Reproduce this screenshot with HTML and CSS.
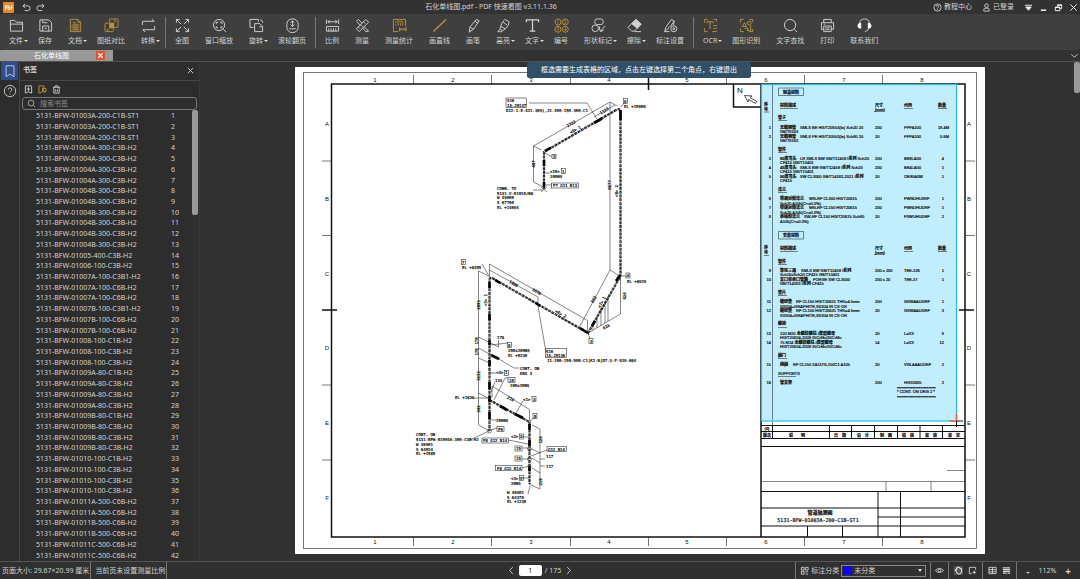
FILE: index.html
```html
<!DOCTYPE html>
<html lang="zh-CN">
<head>
<meta charset="utf-8">
<title>石化单线图.pdf - PDF 快速看图 v3.11.1.36</title>
<link rel="stylesheet" href="styles.css">
</head>
<body>
<header class="titlebar">
  <div class="title-left">
    <svg class="logo" viewBox="0 0 12 12"><rect width="12" height="12" rx="1" fill="#e8871e"/><path d="M2.500 8.500V4H4v2.500H2.500M5.500 3v5H7.500V5.500H5.500M9 8.500V4h1.500M9 6h1.500" fill="none" stroke="#fff" stroke-width=".9"/></svg>
    <button class="plain" aria-label="撤销"><svg class="icon-s" viewBox="0 0 10 10"><path d="M3.500 1 1 3.200 3.500 5.500M1 3.200H6.500a2.600 2.600 0 0 1 0 5.200H3"/></svg></button>
    <button class="plain" aria-label="重做"><svg class="icon-s" viewBox="0 0 10 10"><path d="M6.500 1 9 3.200 6.500 5.500M9 3.200H3.500a2.600 2.600 0 0 0 0 5.200H7"/></svg></button>
  </div>
  <h1 class="title">石化单线图.pdf - PDF 快速看图 v3.11.1.36</h1>
  <div class="title-right">
    <button class="plain account"><svg class="icon-s" viewBox="0 0 10 10"><circle cx="5" cy="5" r="4"/><path d="M3.700 4a1.300 1.300 0 1 1 1.800 1.200Q5 5.400 5 6M5 7v.8"/></svg>教程中心</button>
    <button class="plain account"><svg class="icon-s" viewBox="0 0 10 10"><circle cx="5" cy="3" r="2"/><path d="M2 9V7.500Q2 5.800 4 5.800H6Q8 5.800 8 7.500V9Z"/></svg>已登录</button>
    <div class="window-buttons">
      <button class="plain" aria-label="菜单"><svg class="icon-s bright" viewBox="0 0 10 10"><path d="M1 2.500h8"/><path d="M2 4.500h6L5 8Z" fill="#fff"/></svg></button>
      <button class="plain" aria-label="最小化"><svg class="icon-s bright" viewBox="0 0 10 10"><path d="M2 8h6" stroke-width="1.500"/></svg></button>
      <button class="plain" aria-label="还原"><svg class="icon-s bright" viewBox="0 0 10 10"><path d="M4 4V2h4.500v4H6.500M1.500 4.500h5V8.500h-5ZM4 2.500h4.500M1.500 5h5"/></svg></button>
      <button class="plain" aria-label="关闭"><svg class="icon-s bright" viewBox="0 0 10 10"><path d="m1.500 1.500 7 7M8.500 1.500l-7 7"/></svg></button>
    </div>
  </div>
</header>

<nav class="ribbon" aria-label="工具栏">
  <div class="group ends-menu">
    <button class="tool menu"><svg viewBox="0 0 16 16"><path d="M1.500 14V2.500H6L8 4.500h6.500V14ZM1.500 6.500h13"/></svg><span>文件</span></button>
    <button class="tool"><svg viewBox="0 0 16 16"><path d="M2 2h9.500L14.500 5v9H2ZM5 14V8.500h6.500V14M5 2.500V5h5M7 11h2.500"/></svg><span>保存</span></button>
    <button class="tool menu gold"><svg viewBox="0 0 16 16"><path d="M2.500 1.500h8l3 3v10h-11ZM10.500 1.500v3h3M5 5h3.500M5 7.500h6M5 10h6M5 12.500h6" /><path d="M3.500 6h9v7.500h-9Z" class="fill-dim"/></svg><span>文档</span></button>
    <button class="tool gold"><svg viewBox="0 0 16 16"><path d="M6 5V2q0-1 1-1h7q1 0 1 1v7q0 1-1 1h-3M5 5.500H2q-1 0-1 1V13.500q0 1 1 1H9q1 0 1-1V11M3.500 11.500V13h2M12.500 4.500V3h-2"/><rect x="6" y="5.500" width="4.500" height="5" fill="currentColor"/></svg><span>图纸对比</span></button>
    <button class="tool menu"><svg viewBox="0 0 16 16"><path d="M1.500 7.500V3.500H14M11.500 1l2.500 2.500M14.500 8.500v4H2M4.500 15 2 12.500"/></svg><span>转换</span></button>
  </div>
  <div class="group">
    <button class="tool"><svg viewBox="0 0 16 16"><path d="M1.500 5V1.500H5M1.500 1.500l5 5M11 1.500h3.500V5M14.500 1.500l-5 5M1.500 11v3.500H5M1.500 14.500l5-5M11 14.500h3.500V11M14.500 14.500l-5-5"/></svg><span>全图</span></button>
    <button class="tool"><svg viewBox="0 0 16 16"><circle cx="7.500" cy="7.500" r="6"/><path d="m12 12 3 3M4.500 6.500v-2h2M8.500 4.500h2v2M10.500 8.500v2h-2M6.500 10.500h-2v-2"/></svg><span>窗口缩放</span></button>
    <button class="tool menu"><svg viewBox="0 0 16 16"><path d="M10 4V1.500H1V10h4M6 6h5.500l3 3v5.500H6ZM12 2q2.500 0 2.500 3M11 9.500h3"/></svg><span>旋转</span></button>
    <button class="tool"><svg viewBox="0 0 16 16"><rect x="2" y="1" width="12" height="14.500" rx="5.500"/><path d="M8 3v6M6 5l2-2 2 2M6 7l2 2 2-2M4.500 11.500h7"/></svg><span>滚轮翻页</span></button>
  </div>
  <div class="group">
    <button class="tool"><svg viewBox="0 0 16 16"><path d="M1.500 1.500v5M14.500 1.500v5M3 4h10M5 2.500 3 4l2 1.500M11 2.500 13 4l-2 1.500M1.500 9h13v5h-13ZM4 11v3M6.500 11v3M9 11v3M11.500 11v3"/></svg><span>比例</span></button>
    <button class="tool"><svg viewBox="0 0 16 16"><path d="m11.500 1.500 3 3-10 10-3-3ZM1.500 3.500l2-2 4 4M9.500 9l5 5-3 .5-4-4.500M9 4l2 2M6 7l2 2M3.500 9.500l1.500 1.500M2 4l4 4"/></svg><span>测量</span></button>
    <button class="tool gold"><svg viewBox="0 0 16 16"><path d="M7 14.500H1.500v-13h13V9M4 8V6.500M6.500 8V4.500M9 8V5.500M11.500 8V3.500M3.500 5 6 3l2.500 1L11 3M8 10v4M15 10v4M9 12h5M10 11l-1.500 1 1.500 1M13 11l1.500 1-1.500 1"/></svg><span>测量统计</span></button>
    <button class="tool gold"><svg viewBox="0 0 16 16"><path d="M1.500 14.500 15 1.500" stroke-width="1.500"/></svg><span>画直线</span></button>
    <button class="tool"><svg viewBox="0 0 16 16"><path d="m11 1.500 3 1.500-6 9-4.500 2.500.5-4.500ZM4.500 10l3.500 2M9.500 3.500l3 2M3 15l2-.5"/></svg><span>画笔</span></button>
    <button class="tool menu"><svg viewBox="0 0 16 16"><path d="m9.500 1.500 4.500 2.500q0 4-4 7.500L5 9q1-5 4.500-7.500ZM5 9l-1 3 3 1.500 3-2M3.500 12.500 2 14.500l4 .3 1-1.300M7.500 4.500l4.500 3"/></svg><span>高亮</span></button>
    <button class="tool menu"><svg viewBox="0 0 16 16"><path d="M1.500 4.500V2h13v2.500M8 2v12M5 14h6" stroke-width="1.300"/></svg><span>文字</span></button>
    <button class="tool gold"><svg viewBox="0 0 16 16"><circle cx="4.300" cy="4.300" r="3.200"/><circle cx="12" cy="4.300" r="3.200"/><circle cx="4.300" cy="12" r="3.200"/><circle cx="12" cy="12" r="3.200"/><path d="M4.300 2.500v3.500M11 3q2-.5 1.500 1L11 6h2M3.500 10.500h1.500L4 12q2 0 .5 1.500h-1M12.500 14v-3.500L11 12.500h2.500" stroke-width=".7"/></svg><span>编号</span></button>
    <button class="tool menu"><svg viewBox="0 0 16 16"><rect x="4" y="1" width="9" height="6" rx="2.500"/><circle cx="4.500" cy="11" r="3.500"/><path d="M9 9v3M10 14.500l5-6M9 11l1 3.500 3.500-1.500"/></svg><span>形状标记</span></button>
    <button class="tool menu"><svg viewBox="0 0 16 16"><path d="m9.500 1.500 5.500 5L8 14H5L1 10Z"/><path d="m9.500 1.500 5.500 5-4 4.500L5 6Z" fill="currentColor"/><path d="M8 14.500h7"/></svg><span>擦除</span></button>
    <button class="tool"><svg viewBox="0 0 16 16"><path d="m9 1.500 3 2-1 4M9 1.500 3 10l-1 3.500 3-1.500 2-3M1 14.500h6M12 3 8 9"/><circle cx="11.500" cy="11.500" r="3.200"/><circle cx="11.500" cy="11.500" r="1"/></svg><span>标注设置</span></button>
  </div>
  <div class="group last">
    <button class="tool menu gold"><svg viewBox="0 0 16 16"><path d="M1.500 5V1.500H5M11 1.500h3.500V4M1.500 11v3.500H5M4 5.500V4h7v1.500M7.500 4v8M11 8h4M11 11h4M10 14.500h5"/></svg><span>OCR</span></button>
    <button class="tool gold"><svg viewBox="0 0 16 16"><path d="M1.500 5V1.500H5M11 1.500h3.500V4M1.500 11v3.500H5M14.500 12v2.500H11M6 5l2 4H3.500ZM9 10v3.500M6 11h2M12.500 8v5.500h-3V11"/><circle cx="11" cy="5.500" r="2"/></svg><span>图形识别</span></button>
    <button class="tool"><svg viewBox="0 0 16 16"><circle cx="7.500" cy="7.500" r="6"/><path d="m12 12 3 3"/></svg><span>文字查找</span></button>
    <button class="tool"><svg viewBox="0 0 16 16"><path d="M4 5V1.500h8V5M4 12H1.500V5h13v7H12M4 8.500h8v6H4ZM5.500 10.500h5M5.500 12.500h5M4 6.500h1.500"/></svg><span>打印</span></button>
    <button class="tool"><svg viewBox="0 0 16 16"><path d="M2.500 6.500Q3 1 8 1t5.500 5.500M13 10q-1 4-4.500 4.500"/><path d="M4 5.500v5.500Q1 11 1 8.300T4 5.500ZM12 5.500v5.500q3 0 3-2.700T12 5.500Z" fill="#fff" stroke="#fff"/></svg><span>联系我们</span></button>
  </div>
</nav>

<div class="tabs">
  <div class="tab"><span class="tab-name">石化单线图</span><button class="tab-close" aria-label="关闭标签"><svg viewBox="0 0 8 8"><path d="m2 2 4 4M6 2 2 6"/></svg></button></div>
  <button class="plain tabs-more" aria-label="更多标签"><svg class="icon-s" viewBox="0 0 10 10"><path d="M1.500 3.500 5 7l3.500-3.500"/></svg></button>
</div>

<div class="workspace">
  <nav class="rail" aria-label="面板">
    <button class="rail-button active" aria-label="书签"><svg viewBox="0 0 16 16"><path d="M3.500 2h9v12.500L8 11.500l-4.500 3Z"/></svg></button>
    <button class="rail-button" aria-label="帮助"><svg viewBox="0 0 16 16"><circle cx="8" cy="8" r="6.500"/><path d="M6 6.500a2 2 0 1 1 2.800 1.700Q8 8.600 8 9.500M8 11v1"/></svg></button>
  </nav>
  <aside class="sidebar">
    <div class="side-head"><h2>书签</h2><button class="plain" aria-label="关闭面板"><svg class="icon-s" viewBox="0 0 10 10"><path d="m2 2 6 6M8 2 2 8"/></svg></button></div>
    <div class="side-tools">
      <button class="plain" aria-label="添加书签"><svg class="icon-s" viewBox="0 0 10 10"><path d="M1.500 1h7v8L5 7.500 1.500 9ZM5 2.500v4M3 4.500h4"/></svg></button>
      <button class="plain gold" aria-label="批量书签"><svg class="icon-s" viewBox="0 0 10 10"><path d="M5 7.500 1 9V1h5.500v2M5 3v5M6 4h3v3H6ZM7.500 2.500v2M7.500 7v2"/></svg></button>
      <button class="plain" aria-label="删除书签"><svg class="icon-s" viewBox="0 0 10 10"><path d="M1 2.500h8M3.500 2.500V1h3v1.500M2 2.500V9h6V2.500M4 5v2.500M6 5v2.500"/></svg></button>
    </div>
    <label class="search"><svg class="icon-s" viewBox="0 0 10 10"><circle cx="4.500" cy="4.500" r="3.200"/><path d="m7 7 2 2"/></svg><input type="text" placeholder="搜索书签" aria-label="搜索书签"></label>
    <div class="list-wrap">
      <ul class="bookmarks">
        <li><a href="#">5131-BFW-01003A-200-C1B-ST1</a><span>1</span></li>
        <li><a href="#">5131-BFW-01003A-200-C1B-ST1</a><span>2</span></li>
        <li><a href="#">5131-BFW-01003A-200-C1B-ST1</a><span>3</span></li>
        <li><a href="#">5131-BFW-01004A-300-C3B-H2</a><span>4</span></li>
        <li><a href="#">5131-BFW-01004A-300-C3B-H2</a><span>5</span></li>
        <li><a href="#">5131-BFW-01004A-300-C3B-H2</a><span>6</span></li>
        <li><a href="#">5131-BFW-01004A-300-C3B-H2</a><span>7</span></li>
        <li><a href="#">5131-BFW-01004B-300-C3B-H2</a><span>8</span></li>
        <li><a href="#">5131-BFW-01004B-300-C3B-H2</a><span>9</span></li>
        <li><a href="#">5131-BFW-01004B-300-C3B-H2</a><span>10</span></li>
        <li><a href="#">5131-BFW-01004B-300-C3B-H2</a><span>11</span></li>
        <li><a href="#">5131-BFW-01004B-300-C3B-H2</a><span>12</span></li>
        <li><a href="#">5131-BFW-01004B-300-C3B-H2</a><span>13</span></li>
        <li><a href="#">5131-BFW-01005-400-C3B-H2</a><span>14</span></li>
        <li><a href="#">5131-BFW-01006-100-C3B-H2</a><span>15</span></li>
        <li><a href="#">5131-BFW-01007A-100-C3B1-H2</a><span>16</span></li>
        <li><a href="#">5131-BFW-01007A-100-C6B-H2</a><span>17</span></li>
        <li><a href="#">5131-BFW-01007A-100-C6B-H2</a><span>18</span></li>
        <li><a href="#">5131-BFW-01007B-100-C3B1-H2</a><span>19</span></li>
        <li><a href="#">5131-BFW-01007B-100-C6B-H2</a><span>20</span></li>
        <li><a href="#">5131-BFW-01007B-100-C6B-H2</a><span>21</span></li>
        <li><a href="#">5131-BFW-01008-100-C1B-H2</a><span>22</span></li>
        <li><a href="#">5131-BFW-01008-100-C3B-H2</a><span>23</span></li>
        <li><a href="#">5131-BFW-01008-100-C3B-H2</a><span>24</span></li>
        <li><a href="#">5131-BFW-01009A-80-C1B-H2</a><span>25</span></li>
        <li><a href="#">5131-BFW-01009A-80-C3B-H2</a><span>26</span></li>
        <li><a href="#">5131-BFW-01009A-80-C3B-H2</a><span>27</span></li>
        <li><a href="#">5131-BFW-01009A-80-C3B-H2</a><span>28</span></li>
        <li><a href="#">5131-BFW-01009B-80-C1B-H2</a><span>29</span></li>
        <li><a href="#">5131-BFW-01009B-80-C3B-H2</a><span>30</span></li>
        <li><a href="#">5131-BFW-01009B-80-C3B-H2</a><span>31</span></li>
        <li><a href="#">5131-BFW-01009B-80-C3B-H2</a><span>32</span></li>
        <li><a href="#">5131-BFW-01010-100-C1B-H2</a><span>33</span></li>
        <li><a href="#">5131-BFW-01010-100-C3B-H2</a><span>34</span></li>
        <li><a href="#">5131-BFW-01010-100-C3B-H2</a><span>35</span></li>
        <li><a href="#">5131-BFW-01010-100-C3B-H2</a><span>36</span></li>
        <li><a href="#">5131-BFW-01011A-500-C6B-H2</a><span>37</span></li>
        <li><a href="#">5131-BFW-01011A-500-C6B-H2</a><span>38</span></li>
        <li><a href="#">5131-BFW-01011B-500-C6B-H2</a><span>39</span></li>
        <li><a href="#">5131-BFW-01011B-500-C6B-H2</a><span>40</span></li>
        <li><a href="#">5131-BFW-01011C-500-C6B-H2</a><span>41</span></li>
        <li><a href="#">5131-BFW-01011C-500-C6B-H2</a><span>42</span></li>
      </ul>
      <div class="scroll"><div class="thumb list-thumb"></div></div>
    </div>
  </aside>

  <main class="canvas">
    <svg class="sheet" viewBox="295 67 690 487" role="img" aria-label="管道轴测图">
      <!-- sheet border and grid references -->
      <g class="thin">
        <rect x="303.500" y="72.500" width="673" height="476"/>
        <path d="M413.500 75v9M491.500 75v9M570.500 75v9M726.500 75v9M804.500 75v9M882.500 75v9M413.500 537v9M491.500 537v9M570.500 537v9M648.500 537v9M726.500 537v9M804.500 537v9M882.500 537v9M322 161h10M322 235.500h10M322 385h10M322 460h10M965 161h10M965 235.500h10M965 385h10M965 460h10"/>
      </g>
      <rect class="thick" x="331.500" y="84" width="633.500" height="453"/>
      <path class="thick" d="M648.500 75v15M322 310h15M959 310h15M733.500 84v23H761M761 84V537"/>
      <g class="ref">
        <text x="375" y="82">1</text><text x="453" y="82">2</text><text x="531" y="82">3</text><text x="609" y="82">4</text><text x="687" y="82">5</text><text x="766" y="82">6</text><text x="844" y="82">7</text><text x="922" y="82">8</text>
        <text x="375" y="544">1</text><text x="453" y="544">2</text><text x="531" y="544">3</text><text x="609" y="544">4</text><text x="687" y="544">5</text><text x="766" y="544">6</text><text x="844" y="544">7</text><text x="922" y="544">8</text>
        <text x="327" y="126">A</text><text x="327" y="201">B</text><text x="327" y="276">C</text><text x="327" y="350">D</text><text x="327" y="425">E</text><text x="327" y="500">F</text>
        <text x="969" y="126">A</text><text x="969" y="201">B</text><text x="969" y="276">C</text><text x="969" y="350">D</text><text x="969" y="425">E</text><text x="969" y="500">F</text>
        <text class="north" x="740" y="93">N</text>
      </g>
      <path class="arrow" d="M744.500 95.500l7.500.5-2 1.500 7 4-1.500 2-7-4-.5 2.500Z"/>

      <!-- pipe runs -->
      <path class="pipe" d="M544 189V152L616 110Q620.500 107.500 620.500 113V276L588 333 493 278.500Q489.500 276.500 489.500 280V431M489.500 400 529.500 422V484"/>
      <path class="core" d="M544 189V152L616 110Q620.500 107.500 620.500 113V276L588 333 493 278.500Q489.500 276.500 489.500 280V431M489.500 354l10 5M489.500 400 529.500 422V484"/>
      <path class="weld" d="M489.500 282v6M489.500 314v6M489.500 340v5M489.500 360v6M489.500 382v7M489.500 396v6M489.500 412v7M495 280l5 3M545 151l6-3.500M594 123l8-4.500M620.500 110v10M616 281l4-6M580 328l8 5M592 326l3-5M536 303l4 3M500 406l7 4M515 414l8 4M529.500 424v6M529.500 440v6M529.500 466v5M544 160v6M544 182v5M491 355l8 4"/>
      <g class="line">
        <path d="M533.500 146 610 102M533.500 146v36M533.500 146l8 4M533.500 182l10 5M610 102l7 4M594 117l21-12M529 103h58l10 16M610 102V270M621 107l4-5M545 153l7 4M552 185h-7M533 190h10M541 187l6 5M547 187l-6 5M545 173h5M610 270 579 328M610 270l8 5M622 276h6M620.500 276v38L588 333l2 6M593 330v-6M597 328v-12M601 326v-18M605 323v-22M608 321v-25"/>
        <path d="M489.500 264 587.500 320.500V332M489.500 264v13M489.500 270 538 297v9l8 46M482 264l7 12M478.500 271v154M478.500 271l10 5M478.500 337l20 10v-7M478.500 348l11 6M478.500 358l11 5M478.500 393l11 6M478.500 425l11 6M499 359l15 9h5M490 345l18-2M490 373h6M492 386l37.500 23.500V421M492 386v12M491 392l4-10M494 400l11-22h3M471 398h18M516 413l7-12M530 421l5-4M490 420h6M491 430l6-2M470 440l19-9M508 440l20 4M522 448h7M531 456l16-6M522 459h7M522 468l7-2M520 437h9M519 478h10M528 494l2-8M532 425l8 4V489l-11-5M532 449l8 4M532 458l8 5M532 468l8 5M540 459h5M540 466h5"/>
        <circle cx="529.500" cy="449" r="2"/><circle cx="529.500" cy="459" r="2"/><circle cx="529.500" cy="466" r="1.500"/><circle cx="489.500" cy="431" r="2"/>
        <rect x="506" y="98" width="20.500" height="9.500"/><rect x="545.500" y="348.500" width="21" height="9"/>
        <rect x="623.500" y="98.500" width="4" height="5"/><rect x="552" y="154.500" width="4" height="4"/><rect x="561.500" y="168.500" width="4" height="5"/><rect x="551.500" y="183" width="27" height="5"/><rect x="461.500" y="259.500" width="4" height="5"/><rect x="626" y="273" width="4" height="5"/><rect x="589" y="338.500" width="4" height="5"/><rect x="507.500" y="342.500" width="4" height="5"/><rect x="504.500" y="370.500" width="4" height="5"/><rect x="508" y="377.500" width="7" height="5"/><rect x="532" y="396.500" width="4" height="5"/><rect x="533" y="413.500" width="4" height="5"/><rect x="497" y="426.500" width="7" height="5"/><rect x="519.500" y="434" width="4" height="5"/><rect x="482" y="438" width="26.500" height="5"/><rect x="547" y="446.500" width="19.500" height="5"/><rect x="515" y="446" width="7" height="5"/><rect x="515" y="456" width="7" height="5"/><rect x="495.500" y="465.500" width="26.500" height="5"/><rect x="519.500" y="475.500" width="4" height="5"/>
      </g>
      <g class="note">
        <text x="507" y="102">S16</text><text x="507" y="107">1A-J0137</text><text x="506" y="112">D12-1-E-421-369),J2-200-150-300-C1</text>
        <text x="624" y="108">EL +15606</text><text x="624" y="103">9</text><text x="553" y="158">3</text>
        <text x="550" y="173">&lt;10&gt; 1</text><text x="550" y="178">200NS</text><text x="553" y="187">F7 G11 B13</text>
        <text x="497" y="190">CONN. TO</text><text x="497" y="195">5131-V-01010/N8</text><text x="497" y="199">W 49000</text><text x="497" y="204">S 67700</text><text x="497" y="209">EL +14694</text>
        <text x="462" y="264">7</text><text x="462" y="269">EL +8305</text><text x="627" y="277">4</text><text x="627" y="283">EL +8929</text><text x="590" y="343">3</text>
        <text x="546" y="353">S16</text><text x="546" y="357">1A-J0136</text><text x="547" y="362">J1-200-150-500-C1|K2-B|D7-3-F-929-684</text>
        <text x="497" y="339">178</text><text x="508" y="347">8</text><text x="508" y="352">200x200NS</text><text x="508" y="357">EL +5236</text><text x="520" y="370">CONT. ON</text><text x="520" y="375">DRG 3</text>
        <text x="496" y="374">&lt;4&gt;</text><text x="505" y="374">1</text><text x="495" y="382">133</text><text x="509" y="382">10</text><text x="510" y="387">200x20NS</text><text x="455" y="399">EL +1824</text><text x="523" y="401">&lt;1&gt;</text><text x="533" y="401">3</text><text x="534" y="418">5</text><text x="496" y="422">200NS</text><text x="498" y="431">F6</text>
        <text x="511" y="438">&lt;2&gt;</text><text x="520" y="438">2</text><text x="483" y="442">F8 G12 B14</text><text x="548" y="451">G12 B14</text><text x="516" y="450">15</text><text x="516" y="460">15</text><text x="546" y="458">117</text><text x="546" y="468">117</text><text x="497" y="470">F8 G12 B14</text><text x="511" y="480">&lt;3&gt;</text><text x="520" y="480">2</text><text x="511" y="485">20NS</text>
        <text x="507" y="494">W 46901</text><text x="507" y="499">S 64376</text><text x="507" y="503">EL +1235</text>
        <text x="416" y="436">CONT. ON</text><text x="416" y="441">5131-BFW-01004A-300-C3B-H2</text><text x="416" y="446">W 46901</text><text x="416" y="451">S 64024</text><text x="416" y="455">EL +1585</text>
      </g>
      <g class="note dim">
        <text transform="translate(572 125) rotate(-30)">2722</text><text transform="translate(605 112) rotate(-30)">1123</text><text transform="translate(576 131) rotate(-30)">&lt;9&gt; 1</text>
        <text transform="translate(535 164) rotate(-90)">407</text><text transform="translate(611 185) rotate(-90)">6677</text><text transform="translate(618 191) rotate(-90)">&lt;8&gt; 2</text>
        <text transform="translate(595 300) rotate(-60)">862</text><text transform="translate(603 303) rotate(-60)">&lt;7&gt; 1</text><text transform="translate(626 296) rotate(-90)">624</text><text transform="translate(607 328) rotate(-30)">624</text>
        <text transform="translate(536 293) rotate(30)">3676</text><text transform="translate(513 285) rotate(30)">1806</text><text transform="translate(560 315) rotate(30)">&lt;6&gt; 2</text><text transform="translate(487 300) rotate(-90)">&lt;5&gt; 1</text>
        <text transform="translate(480 305) rotate(-90)">2891</text><text transform="translate(478 341) rotate(-90)">178</text><text transform="translate(478 352) rotate(-90)">178</text><text transform="translate(480 376) rotate(-90)">3232</text><text transform="translate(480 409) rotate(-90)">242</text>
        <text transform="translate(510 400) rotate(30)">219</text><text transform="translate(542 440) rotate(-90)">124</text><text transform="translate(542 482) rotate(-90)">219</text>
      </g>

      <!-- title block -->
      <path class="medium" d="M761 425.500H965M761 431.500H965M761 438.500H965M761 446.500H965M761 491.500H965M761 508H965M761 526H965M878 517h87M878 491.500V537M900.500 491.500V537M807.500 526v11M842.500 526v11M772.500 425.500V438M829.500 425.500V438M851.500 425.500V438M874.500 425.500V438M897.500 425.500V438M920 425.500V438M942.500 425.500V438"/>
      <path class="line" d="M761 481.500H965M886 481.500v10M931 481.500v10M947 470.500h18M772.500 84V425"/>
      <g class="bom head-row">
        <text x="767" y="430">(0)</text><text x="767" y="437">版次</text><text x="797" y="437">说　　明</text><text x="840" y="437">日　期</text><text x="863" y="437">设　计</text><text x="886" y="437">制　图</text><text x="908" y="437">校　核</text><text x="931" y="437">审　核</text><text x="954" y="437">审　定</text>
      </g>
      <g class="doc"><text class="bold" x="820" y="514">管道轴测图</text><text x="818" y="522">5131-BFW-01003A-200-C1B-ST1</text></g>

      <!-- bill of materials -->
      <rect class="selection" x="761.500" y="84.500" width="195" height="336.500"/>
      <path class="line" d="M772.500 85V420M778.500 88h25v7.500h-25ZM778.500 231.500h25v7.500h-25ZM780 108.500h18M874 111.500h10M904 108.500h9M938 108.500h9M764 112h5M778 120.500h9M778 152.500h9M778 192.500h9M780 251.500h18M874 254.500h10M904 251.500h9M938 251.500h9M764 255.500h5M778 264.500h9M778 295.500h9M778 327.500h9M778 358.500h9M778 376.500h18"/>
      <g class="bom bold">
        <text x="783" y="94">制造材料</text><text x="764" y="106">序</text><text x="764" y="111">号</text><text x="780" y="107">材料描述</text><text x="875" y="107">尺寸</text><text x="875" y="111">(mm)</text><text x="904" y="107">代码</text><text x="938" y="107">数量</text>
        <text x="778" y="119">管子</text><text x="778" y="151">管件</text><text x="778" y="191">法兰</text>
        <text x="783" y="237">安装材料</text><text x="764" y="249">序</text><text x="764" y="254">号</text><text x="780" y="250">材料描述</text><text x="875" y="250">尺寸</text><text x="875" y="254">(mm)</text><text x="904" y="250">代码</text><text x="938" y="250">数量</text>
        <text x="778" y="263">管件</text><text x="778" y="294">垫片</text><text x="778" y="325">螺栓</text><text x="778" y="357">阀门</text>
      </g>
      <g class="bom">
        <text x="780" y="129"><tspan class="cn">无缝钢管</tspan></text><text x="800" y="129">SMLS BE HG/T20553(Ia) Sch20 20</text><text x="780" y="133">GB/T8163</text>
        <text x="780" y="138"><tspan class="cn">无缝钢管</tspan></text><text x="800" y="138">SMLS PE HG/T20553(Ia) Sch80 20</text><text x="780" y="142">GB/T8163</text>
        <text x="780" y="160"><tspan class="cn">90度弯头</tspan></text><text x="800" y="160">LR SMLS BW GB/T12459 I<tspan class="cn">系列</tspan> Sch20</text><text x="780" y="164">CF415 GB/T13401</text>
        <text x="780" y="169"><tspan class="cn">45度弯头</tspan></text><text x="800" y="169">SMLS BW GB/T12459 I<tspan class="cn">系列</tspan> Sch20</text><text x="780" y="173">CF415 GB/T13401</text>
        <text x="780" y="178"><tspan class="cn">90度弯头</tspan></text><text x="800" y="178">SW CL3000 GB/T14383-2021 I<tspan class="cn">系列</tspan></text><text x="780" y="182">CF415</text>
        <text x="780" y="200"><tspan class="cn">带颈对焊法兰</tspan></text><text x="809" y="200">WN-RF CL300 HG/T20615</text><text x="780" y="205">Sch20 A105(C&lt;=0.3%)</text>
        <text x="780" y="209"><tspan class="cn">带颈对焊法兰</tspan></text><text x="809" y="209">WN-RF CL150 HG/T20615</text><text x="780" y="214">Sch20 A105(C&lt;=0.3%)</text>
        <text x="780" y="218"><tspan class="cn">承插焊法兰</tspan></text><text x="804" y="218">SW-RF CL150 HG/T20615 Sch80</text><text x="780" y="223">A105(C&lt;=0.3%)</text>
        <text x="780" y="272"><tspan class="cn">等径三通</tspan></text><text x="801" y="272">SMLS BW GB/T12459 I<tspan class="cn">系列</tspan></text><text x="780" y="276">Sch20xSch20 CF415 GB/T13401</text>
        <text x="780" y="281"><tspan class="cn">支口单承口管箍</tspan></text><text x="813" y="281">FORGE SW CL3000</text><text x="780" y="285">GB/T14383 I<tspan class="cn">系列</tspan> CF415</text>
        <text x="780" y="303"><tspan class="cn">缠绕垫</tspan></text><text x="796" y="303">RF CL150 HG/T20631 THK=4.5mm</text><text x="780" y="308">SS304+GRAPHITE,SS304 IR CS OR</text>
        <text x="780" y="312"><tspan class="cn">缠绕垫</tspan></text><text x="796" y="312">RF CL150 HG/T20631 THK=4.5mm</text><text x="780" y="317">SS304+GRAPHITE,SS304 IR CS OR</text>
        <text x="780" y="335">120 M20 <tspan class="cn">全螺纹螺柱 /厚型螺母</tspan></text><text x="780" y="339">HG/T20634-2009 35CrMo/30CrMo</text>
        <text x="780" y="344">75 M14 <tspan class="cn">全螺纹螺柱 /厚型螺母</tspan></text><text x="780" y="348">HG/T20634-2009 35CrMo/30CrMo</text>
        <text x="780" y="366"><tspan class="cn">闸阀</tspan></text><text x="793" y="366">RF CL150 ZA11Y6-150C1 A105</text>
        <text x="778" y="375">SUPPORTS</text><text x="780" y="384"><tspan class="cn">管支架</tspan></text>
        <text x="875" y="129">200</text><text x="875" y="138">20</text><text x="875" y="160">200</text><text x="875" y="169">200</text><text x="875" y="178">20</text><text x="875" y="200">200</text><text x="875" y="209">200</text><text x="875" y="218">20</text><text x="875" y="272">200 x 200</text><text x="875" y="281">200 x 20</text><text x="875" y="303">200</text><text x="875" y="312">20</text><text x="875" y="335">20</text><text x="875" y="344">14</text><text x="875" y="366">20</text><text x="875" y="384">200</text>
        <text x="904" y="129">PPPA100</text><text x="904" y="138">PPPA100</text><text x="904" y="160">BE9LA00</text><text x="904" y="169">BE4LA00</text><text x="904" y="178">OE90A0W</text><text x="904" y="200">FWNUHU3RF</text><text x="904" y="209">FWNUHUDRF</text><text x="904" y="218">FSWUHUDRF</text><text x="904" y="272">TEE-136</text><text x="904" y="281">TEE-37</text><text x="904" y="303">GSWAAUDRF</text><text x="904" y="312">GSWAAUDRF</text><text x="904" y="335">L=XX</text><text x="904" y="344">L=XX</text><text x="904" y="366">VGLAAAUDRF</text><text x="904" y="384">HGX0005</text>
        <text x="897" y="390">*************************</text><text x="897" y="393">* CONT. ON DRG 2 *</text><text x="897" y="399">*************************</text>
      </g>
      <g class="bom end">
        <text x="771" y="129">1</text><text x="771" y="138">2</text><text x="771" y="160">3</text><text x="771" y="169">4</text><text x="771" y="178">5</text><text x="771" y="200">6</text><text x="771" y="209">7</text><text x="771" y="218">8</text><text x="771" y="272">9</text><text x="771" y="281">10</text><text x="771" y="303">11</text><text x="771" y="312">12</text><text x="771" y="335">13</text><text x="771" y="344">14</text><text x="771" y="366">15</text><text x="771" y="384">16</text>
        <text x="949" y="129">18.4M</text><text x="949" y="138">0.6M</text><text x="944" y="160">4</text><text x="944" y="169">1</text><text x="944" y="178">1</text><text x="944" y="200">1</text><text x="944" y="209">1</text><text x="944" y="218">2</text><text x="944" y="272">1</text><text x="944" y="281">1</text><text x="944" y="303">1</text><text x="944" y="312">3</text><text x="944" y="335">8</text><text x="944" y="344">12</text><text x="944" y="366">2</text><text x="944" y="384">2</text>
      </g>
      <path d="M949 421h7.500v-7" class="cursor-hot"/><path d="M957 421h6M956.500 421v6" class="medium"/>
    </svg>
    <div class="hint" role="status">框选需要生成表格的区域，点击左键选择第二个角点，右键退出</div>
    <div class="canvas-scroll"><div class="thumb canvas-thumb"></div></div>
  </main>
</div>

<footer class="status">
  <div class="status-left"><span>页面大小: 29.67×20.99 厘米</span><span>当前页未设置测量比例</span></div>
  <div class="pager">
    <button class="plain" aria-label="上一页"><svg class="icon-s" viewBox="0 0 10 10"><path d="M6.500 1 3 5l3.500 4"/></svg></button>
    <input type="text" value="1" aria-label="页码"><span>/ 175</span>
    <button class="plain" aria-label="下一页"><svg class="icon-s" viewBox="0 0 10 10"><path d="M3.500 1 7 5 3.500 9"/></svg></button>
  </div>
  <div class="status-right">
    <div class="cell"><svg class="icon-s" viewBox="0 0 10 10"><path d="M1.500 1.500h3v3h-3ZM6 1.500h3v3H6ZM1.500 6h3v3h-3ZM6 6.500h3M6 9h3"/></svg><label for="category">标注分类</label>
      <div class="picker"><i class="swatch"></i><select id="category"><option>未分类</option></select></div></div>
    <div class="cell"><button class="plain" aria-label="显示标注"><svg class="icon-s" viewBox="0 0 10 10"><path d="M.5 5Q5 .5 9.500 5 5 9.500.5 5Z"/><circle cx="5" cy="5" r="1.400"/></svg></button></div>
    <div class="cell modes"><button class="plain pressed" aria-label="手形工具"><svg class="icon-s bright" viewBox="0 0 10 10"><path d="M2.500 6 1 4.500l1-.5 1 .7V2h1.200V1.200h1.300V2H6.800v.8H8.200V6.500Q8 9 5.500 9 3.500 9 2.500 6Z"/></svg></button><button class="plain" aria-label="框选工具"><svg class="icon-s" viewBox="0 0 10 10"><path d="M4 8.500H1.500v-7h7V4M7 5v4M5 7h4"/></svg></button></div>
    <div class="cell views"><button class="plain" aria-label="双页"><svg class="icon-s" viewBox="0 0 10 10"><path d="M1 1.500h8v7H1ZM5 1.500v7M1 4h8M1 6.500h8"/></svg></button><button class="plain" aria-label="单页"><svg class="icon-s" viewBox="0 0 10 10"><path d="M1 2h8M1 4h8M1 6h8M1 8h4M6 8h3" stroke-width="1.400"/></svg></button></div>
    <div class="cell zoom"><button class="plain sign" aria-label="缩小">-</button><span>112%</span><button class="plain sign" aria-label="放大">+</button></div>
  </div>
</footer>
</body>
</html>
```

FILE: styles.css
```css
* { box-sizing: border-box; }
body {
  margin: 0;
  height: 100vh;
  display: flex;
  flex-direction: column;
  overflow: hidden;
  background: #323232;
  color: #d2d2d2;
  font: 7px/10px "Noto Sans", "Noto Sans CJK SC", sans-serif;
}
button, input, select { font: inherit; color: inherit; }
svg { display: block; fill: none; stroke: currentColor; }
h1, h2 { margin: 0; font-size: 7px; font-weight: 400; }
.plain { display: flex; align-items: center; padding: 0; border: 0; background: none; }
.icon-s { width: 9px; height: 9px; flex: none; stroke-width: 1; }
.bright { color: #fff; }
.gold { color: #b8923c; }

.titlebar { display: flex; align-items: center; height: 14px; flex: none; }
.title-left { display: flex; align-items: center; gap: 5px; padding-left: 3px; }
.logo { width: 11px; height: 11px; stroke: none; margin-right: 3px; }
.title { flex: 1; text-align: center; padding-left: 4px; }
.title-right { display: flex; align-items: center; gap: 10px; padding-right: 2px; }
.account { gap: 2px; }
.window-buttons { display: flex; gap: 6px; }

.ribbon { display: flex; align-items: center; height: 36px; flex: none; background: #3f3f3f; border-radius: 4px; }
.group { display: flex; height: 31px; align-items: center; padding: 0 9px; border-right: 1px solid #777; }
.group.ends-menu { padding-right: 5px; }
.group.last { border: 0; }
.tool { display: grid; justify-items: center; row-gap: 3px; padding: 0; border: 0; background: none; white-space: nowrap; }
.tool svg { width: 15px; height: 15px; margin: 0 -1px; stroke-width: 1; }
.tool span { color: #d2d2d2; }
.tool.menu { grid-template-columns: auto 5px; }
.tool.menu svg { grid-row: 1; }
.tool.menu span { grid-row: 2; }
.tool.menu::after {
  content: "";
  grid-area: 2 / 2;
  align-self: center;
  border: 2px solid transparent;
  border-top-color: #ddd;
  border-bottom: 0;
}
.tool + .tool { margin-left: 16px; }
.tool.menu + .tool { margin-left: 10px; }
.fill-dim { fill: #b8923c; fill-opacity: .35; stroke: none; }

.tabs { display: flex; justify-content: space-between; height: 12px; flex: none; border-bottom: 1px solid #505050; }
.tab { display: flex; align-items: center; justify-content: flex-end; width: 113px; padding-right: 8px; background: #989898; color: #fff; }
.tab-name { margin-right: 27px; }
.tab-close { width: 9px; height: 9px; padding: 0; border: 0; background: #e0542f; color: #fff; }
.tabs-more { padding-right: 1px; }

.workspace { display: flex; flex: 1; min-height: 0; }
.rail { display: flex; flex-direction: column; gap: 2px; width: 20px; padding: 0 1px; border-right: 1px solid #474747; background: #2d2d2d; }
.rail-button { display: grid; place-items: center; height: 18px; padding: 0; border: 0; background: none; }
.rail-button svg { width: 14px; height: 14px; }
.rail-button.active { background: #2c4f8c; }

.sidebar { display: flex; flex-direction: column; width: 180px; background: #2d2d2d; border-right: 1px solid #383838; }
.side-head { display: flex; align-items: center; justify-content: space-between; height: 19px; padding: 0 4px 2px 3px; border-bottom: 1px solid #474747; }
.side-head h2 { font-weight: 700; }
.side-tools { display: flex; gap: 5px; padding: 4px 4px 3px; }
.search { display: flex; align-items: center; gap: 4px; height: 13px; margin: 0 2px; padding: 0 4px; border: 1px solid #777; border-radius: 3px; color: #aaa; }
.search input { flex: 1; min-width: 0; padding: 0; border: 0; outline: 0; background: none; }
.search input::placeholder { color: #8c8c8c; }
.list-wrap { display: flex; flex: 1; min-height: 0; }
.bookmarks { display: grid; grid-auto-rows: 1fr; flex: 1; margin: 0; padding: 1px 0 0 16px; list-style: none; }
.bookmarks li { display: grid; grid-template-columns: 135px auto; align-items: center; line-height: 8px; min-height: 0; }
.bookmarks a { color: inherit; text-decoration: none; }
.scroll { width: 8px; padding: 0 1px; background: #303030; }
.thumb { background: #999; border-radius: 2px; }
.list-thumb { height: 105px; }

.canvas { position: relative; flex: 1; min-width: 0; padding-top: 5px; overflow: hidden; }
.canvas-scroll { position: absolute; top: 0; right: 0; width: 6px; height: 100%; }
.canvas-thumb { height: 31px; }
.hint { position: absolute; top: 0; left: 327px; padding: 3px 14px; background: #30506a; color: #fff; border-radius: 2px; white-space: nowrap; }

.sheet { width: 690px; margin: 0 auto; background: #fff; stroke: none; }
.thin { stroke: #555; stroke-width: .8; }
.thick { stroke: #111; stroke-width: 1.5; }
.medium { stroke: #111; stroke-width: 1; }
.line { stroke: #333; stroke-width: .6; }
.arrow { stroke: #222; stroke-width: .8; }
.pipe { stroke: #222; stroke-width: 2.2; stroke-dasharray: 3 .8; }
.core { stroke: #777; stroke-width: .8; stroke-dasharray: 2 1.5; }
.weld { stroke: #000; stroke-width: 2.6; }
.selection { fill: #c1eeff; stroke: #1fc0f8; stroke-width: 1.2; }
.cursor-hot { stroke: #f06030; stroke-width: 1.5; }
.sheet text { fill: #111; stroke: none; white-space: pre; }
.ref { font: 6px "Liberation Sans", sans-serif; text-anchor: middle; }
.north { font-size: 8px; }
.note { font: 4px "DejaVu Sans Mono", monospace; }
.dim { text-anchor: middle; }
.bom { font: 4px "Liberation Sans", "Noto Sans CJK SC", sans-serif; }
.sheet .bom text, .sheet .note text, .sheet .doc text { stroke: #111; stroke-width: .2; }
.bold, .cn { font-weight: 700; }
.head-row { font-weight: 700; text-anchor: middle; }
.end { text-anchor: end; }
.doc { font: 5px "DejaVu Sans Mono", "Noto Sans CJK SC", monospace; text-anchor: middle; }

.status { display: flex; align-items: center; height: 18px; flex: none; border-top: 1px solid #555; background: #303030; white-space: nowrap; }
.status-left, .status-right { display: flex; flex: 1; align-items: center; }
.status-left span { padding: 4px 1px 4px 2px; border-right: 1px solid #777; }
.status-left span + span { padding-left: 4px; }
.status-right { justify-content: flex-end; }
.pager { display: flex; align-items: center; gap: 3px; }
.pager input { width: 23px; height: 11px; padding: 0; border: 0; border-radius: 2px; background: #fff; color: #222; text-align: center; }
.cell { display: flex; align-items: center; gap: 2px; height: 17px; padding: 0 4px; border-left: 1px solid #777; }
.picker { display: flex; align-items: center; position: relative; width: 85px; height: 12px; padding: 0 1px; border: 1px solid #888; }
.picker::after {
  content: "";
  position: absolute;
  right: 3px;
  border: 2px solid transparent;
  border-top: 3px solid #ddd;
  border-bottom: 0;
  pointer-events: none;
}
.swatch { width: 9px; height: 9px; background: #1400ff; }
.picker select { flex: 1; height: 10px; padding: 0 0 0 2px; border: 0; background: none; outline: 0; appearance: none; }
.picker option { background: #303030; }
.modes, .views { gap: 5px; padding: 0 5px; }
.pressed { background: #555; }
.zoom { gap: 9px; padding: 0 9px; }
.sign { font-size: 10px; font-weight: 700; }
```
